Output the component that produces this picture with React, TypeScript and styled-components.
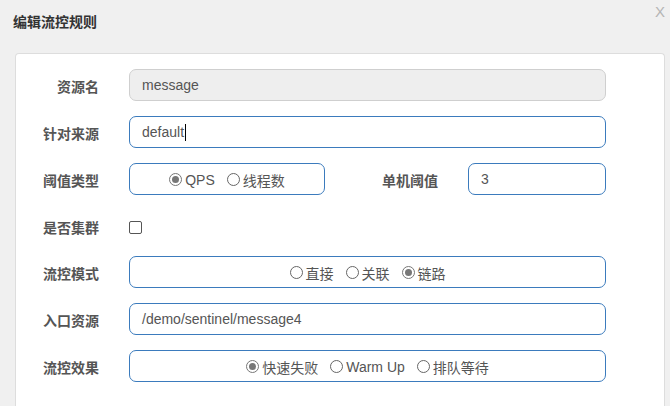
import React from "react";
import styled, { createGlobalStyle } from "styled-components";

const Global = createGlobalStyle`
  html, body { margin: 0; padding: 0; background: #f0f0f0; }
  body { font-family: "Liberation Sans", Arial, "Noto Sans CJK SC", sans-serif; font-size: 14px; color: #555; overflow: hidden; }
`;

const Page = styled.div`
  position: relative;
  padding: 0 5px 0 15px;
  height: 406px;
  box-sizing: border-box;
`;

const Header = styled.div`
  height: 53px;
  display: flex;
  align-items: flex-start;
  padding-top: 13px;
  box-sizing: border-box;
`;

const Title = styled.h3`
  margin: 0 0 0 -2px;
  font-size: 14px;
  font-weight: bold;
  color: #333;
  line-height: 18px;
`;

const Close = styled.span`
  position: absolute;
  top: 4px;
  right: 5px;
  font-family: "Liberation Sans", Arial, sans-serif;
  font-size: 15px;
  color: #b5b5b5;
  line-height: 16px;
`;

const Panel = styled.div`
  background: #fff;
  border: 1px solid #ddd;
  border-bottom: none;
  border-radius: 4px 4px 0 0;
  height: 360px;
  box-sizing: border-box;
  padding: 15px 0 0 0;
  display: flex;
  flex-direction: column;
  gap: 15px;
`;

const Row = styled.div<{ $h?: number }>`
  display: flex;
  align-items: center;
  height: ${(p) => p.$h ?? 32}px;
`;

const Label = styled.label<{ $w?: number }>`
  width: ${(p) => p.$w ?? 83}px;
  flex: none;
  text-align: right;
  font-weight: bold;
  color: #555;
  font-size: 14px;
  padding-top: 2px;
  margin-right: 30px;
  font-family: "Noto Sans CJK SC", sans-serif;
`;

const Input = styled.div<{ $w?: number; $disabled?: boolean }>`
  width: ${(p) => p.$w ?? 477}px;
  flex: none;
  height: 32px;
  box-sizing: border-box;
  border: 1px solid ${(p) => (p.$disabled ? "#cfcfcf" : "#3b7bbd")};
  background: ${(p) => (p.$disabled ? "#eee" : "#fff")};
  border-radius: 7px;
  padding: 0 12px;
  display: flex;
  align-items: center;
  font-size: 14px;
  color: #555;
`;

const RadioBox = styled(Input)`
  justify-content: center;
  gap: 12px;
  padding: 0;
  padding-top: 1px;
`;

const Caret = styled.span`
  display: inline-block;
  width: 1px;
  height: 17px;
  background: #000;
  margin-left: 1px;
`;

const RadioItem = styled.span`
  display: inline-flex;
  align-items: center;
  gap: 3px;
  font-family: "Liberation Sans", Arial, "Noto Sans CJK SC", sans-serif;
  color: #555;
`;

const Dot = styled.span<{ $on?: boolean }>`
  width: 13px;
  height: 13px;
  border-radius: 50%;
  border: 1px solid ${(p) => (p.$on ? "#777" : "#666")};
  box-sizing: border-box;
  display: inline-flex;
  align-items: center;
  justify-content: center;
  background: #fff;
  &::after {
    content: "";
    width: 7px;
    height: 7px;
    border-radius: 50%;
    background: ${(p) => (p.$on ? "#777" : "transparent")};
  }
`;

const Check = styled.span`
  width: 13px;
  height: 13px;
  box-sizing: border-box;
  border: 1px solid #555;
  border-radius: 2px;
  margin-top: 3px;
`;

const Radio = ({ on, children }: { on?: boolean; children: React.ReactNode }) => (
  <RadioItem>
    <Dot $on={on} />
    {children}
  </RadioItem>
);

export default function App() {
  return (
    <>
      <Global />
      <Page>
        <Header>
          <Title>编辑流控规则</Title>
        </Header>
        <Close>X</Close>
        <Panel>
          <Row>
            <Label>资源名</Label>
            <Input $disabled>message</Input>
          </Row>
          <Row>
            <Label>针对来源</Label>
            <Input>
              default
              <Caret />
            </Input>
          </Row>
          <Row>
            <Label>阈值类型</Label>
            <RadioBox $w={196}>
              <Radio on>QPS</Radio>
              <Radio>线程数</Radio>
            </RadioBox>
            <Label $w={113}>单机阈值</Label>
            <Input $w={138}>3</Input>
          </Row>
          <Row $h={31}>
            <Label>是否集群</Label>
            <Check />
          </Row>
          <Row>
            <Label>流控模式</Label>
            <RadioBox>
              <Radio>直接</Radio>
              <Radio>关联</Radio>
              <Radio on>链路</Radio>
            </RadioBox>
          </Row>
          <Row>
            <Label>入口资源</Label>
            <Input>/demo/sentinel/message4</Input>
          </Row>
          <Row>
            <Label>流控效果</Label>
            <RadioBox>
              <Radio on>快速失败</Radio>
              <Radio>Warm Up</Radio>
              <Radio>排队等待</Radio>
            </RadioBox>
          </Row>
        </Panel>
      </Page>
    </>
  );
}
